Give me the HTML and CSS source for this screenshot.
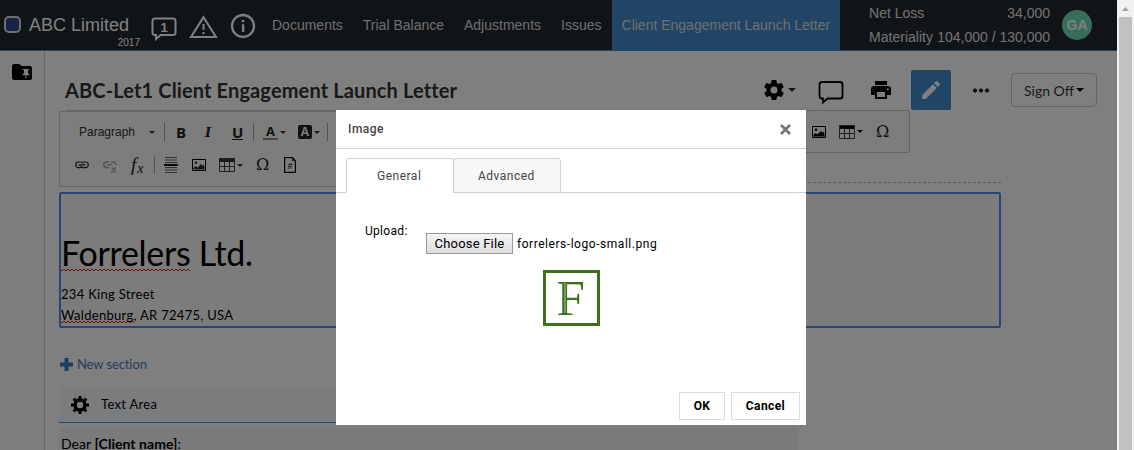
FILE: index.html
```html
<!DOCTYPE html>
<html lang="en">
<head>
<meta charset="utf-8">
<title>ABC-Let1 Client Engagement Launch Letter</title>
<link rel="stylesheet" href="styles.css">
</head>
<body>
<svg class="defs" width="0" height="0">
  <symbol id="picture" viewBox="0 0 14 12"><path d="M.5.5h13v11H.5z" fill="none" stroke="#000"/><circle cx="4" cy="3.8" r="1.3"/><path d="M1.5 10.5V9l2-2 2 1.5L9 5l1.5 1.5 1-.8L12.5 8v2.500z"/></symbol>
  <symbol id="table" viewBox="0 0 16 14"><path d="M0 0h16v4H0z"/><path d="M.5.5h15v13H.5zM.5 8.500h15M5.500 4v9.500M10.500 4v9.500" fill="none" stroke="#444"/></symbol>
  <symbol id="caret" viewBox="0 0 6 3"><path d="M0 0h6L3 3z"/></symbol>
  <symbol id="gear" viewBox="0 0 24 24"><path fill-rule="evenodd" d="M19.430 12.980c.04-.32.070-.64.070-.98s-.03-.66-.07-.98l2.110-1.650c.19-.15.240-.42.120-.64l-2-3.460c-.12-.22-.39-.3-.61-.22l-2.490 1c-.52-.4-1.080-.73-1.690-.98l-.38-2.650A.49.49 0 0 0 14 2h-4c-.25 0-.46.180-.49.420l-.38 2.650c-.61.250-1.170.59-1.690.98l-2.490-1c-.23-.09-.49 0-.61.220l-2 3.460c-.13.220-.07.490.12.640l2.110 1.650c-.04.320-.07.650-.07.980s.03.660.07.980l-2.110 1.650c-.19.150-.24.420-.12.640l2 3.460c.12.220.39.300.61.220l2.490-1c.52.400 1.080.730 1.690.980l.38 2.650c.03.240.24.420.49.420h4c.25 0 .46-.18.49-.42l.38-2.650c.61-.25 1.170-.59 1.690-.98l2.490 1c.23.090.49 0 .61-.22l2-3.460c.12-.22.070-.49-.12-.64zM12 15.500a3.500 3.500 0 1 1 0-7 3.500 3.500 0 0 1 0 7z"/></symbol>
</svg>
<div class="app">
  <header class="topbar">
    <span class="brand-mark"></span>
    <div class="brand"><span class="brand-name">ABC Limited</span><span class="brand-year">2017</span></div>
    <svg class="h-comment" width="26" height="26" viewBox="0 0 26 26"><path d="M4 1.500h18q2.500 0 2.500 2.500v11.500q0 2.500-2.500 2.500H9.500L5 22v-4H4q-2.500 0-2.500-2.500V4Q1.500 1.500 4 1.500z" fill="none" stroke="#fff" stroke-width="2"/><text x="13" y="14.500" text-anchor="middle">1</text></svg>
    <svg class="h-warn" width="29" height="24" viewBox="0 0 29 24"><path d="M14.500 2.200 27 22H2z" fill="none" stroke="#fff" stroke-width="2.100"/><path d="M13.500 9h2v6h-2zM13.500 17h2v2.200h-2z" fill="#fff"/></svg>
    <svg class="h-info" width="26" height="26" viewBox="0 0 26 26"><circle cx="13" cy="13" r="11" fill="none" stroke="#fff" stroke-width="2.300"/><path d="M11.900 7h2.400v2.300h-2.400zM11.900 11.200h2.400V19h-2.400z" fill="#fff"/></svg>
    <nav class="nav"><a>Documents</a><a>Trial Balance</a><a>Adjustments</a><a>Issues</a><a class="active">Client Engagement Launch Letter</a></nav>
    <div class="totals"><div><span>Net Loss</span><span>34,000</span></div><div><span>Materiality</span><span>104,000 / 130,000</span></div></div>
    <span class="avatar">GA</span>
  </header>
  <div class="main">
    <aside class="side"><svg width="20" height="16" viewBox="0 0 20 16"><path d="M2 0h5.500l2 2H18q2 0 2 2v10q0 2-2 2H2q-2 0-2-2V2q0-2 2-2z"/><path d="M11 5h6v1h-1v3l1.500 1.500v.8h-3V14h-1v-2.700h-3v-.8L12 9V6h-1z" fill="#fff"/></svg></aside>
    <div class="doc">
      <div class="title-row">
        <h1>ABC-Let1 Client Engagement Launch Letter</h1>
        <svg class="t-gear" width="24" height="24"><use href="#gear"/></svg>
        <svg class="t-caret" width="8" height="4"><use href="#caret"/></svg>
        <svg class="t-comment" width="26" height="25" viewBox="0 0 26 25"><path d="M4 2h18q2.500 0 2.500 2.500V16q0 2.500-2.500 2.500H9.500L5 22.500v-4H4Q1.500 18.500 1.500 16V4.500Q1.500 2 4 2z" fill="none" stroke="#000" stroke-width="1.800"/></svg>
        <svg class="t-print" width="20" height="18" viewBox="0 0 20 18"><path fill-rule="evenodd" d="M4 0h12v4H4zM3 5h14q3 0 3 3v6h-4v4H4v-4H0V8q0-3 3-3zm3 6v5h8v-5zm10.800-3.800a1 1 0 1 0 .1 0z"/></svg>
        <span class="edit"><svg width="18" height="18" viewBox="0 0 18 18"><path d="M0 14.200V18h3.800L14.800 7 11 3.200zM17.700 4.100q.6-.7 0-1.400L15.300.3q-.7-.6-1.400 0L12 2.200 15.800 6z" fill="#fff"/></svg></span>
        <svg class="t-more" width="17" height="5"><circle cx="3" cy="2.500" r="2"/><circle cx="9" cy="2.500" r="2"/><circle cx="15" cy="2.500" r="2"/></svg>
        <span class="signoff">Sign Off <svg width="8" height="4"><use href="#caret"/></svg></span>
      </div>
      <div class="bars">
        <div class="bar-wide">
          <svg width="14" height="12"><use href="#picture"/></svg>
          <svg class="gap13" width="16" height="14"><use href="#table"/></svg>
          <svg class="gap2" width="6" height="3"><use href="#caret"/></svg>
          <span class="omega wide-omega">Ω</span>
        </div>
        <div class="bar-left">
          <div class="tools">
            <span class="para">Paragraph</span><svg class="c-para" width="6" height="3"><use href="#caret"/></svg><i class="sep"></i>
            <b class="g bold">B</b><b class="g ital">I</b><b class="g under">U</b><i class="sep s2"></i>
            <b class="g fore">A</b><svg class="gap2" width="6" height="3"><use href="#caret"/></svg>
            <b class="g back">A</b><svg class="gap2" width="6" height="3"><use href="#caret"/></svg><i class="sep s3"></i>
          </div>
          <div class="tools second">
            <svg class="link" width="14" height="8" viewBox="0 0 14 8"><path d="M6 1H3.500a2.700 2.700 0 0 0 0 5.600H6M8 1h2.500a2.700 2.700 0 0 1 0 5.600H8M3.500 3.800h7M6 1q2 0 2 1.500M8 6.600q-2 0-2-1.500" fill="none" stroke="#222" stroke-width="1.200"/></svg>
            <svg class="unlink" width="14" height="12" viewBox="0 0 14 12"><path d="M6 1H3.500a2.700 2.700 0 0 0 0 5.600H6M8 1h2.500a2.700 2.700 0 0 1 2.500 3M3.500 3.800h6M8.500 6.500l4.500 5M13 6.500l-4.500 5" fill="none" stroke="#a6a6a6" stroke-width="1.300"/></svg>
            <span class="fx">f<sub>x</sub></span><i class="sep s4"></i>
            <svg class="rule" width="14" height="16" viewBox="0 0 14 16"><path d="M1 .5h12M1 3h12M1 5.500h12M1 10.500h12M1 13h12M1 15.500h12" stroke="#666"/><path d="M0 8h14" stroke="#111" stroke-width="2"/></svg>
            <svg class="gap14" width="14" height="12"><use href="#picture"/></svg>
            <svg class="gap13" width="16" height="14"><use href="#table"/></svg>
            <svg class="gap2" width="6" height="3"><use href="#caret"/></svg>
            <span class="omega">Ω</span>
            <svg class="hash" width="12" height="16" viewBox="0 0 12 16"><path d="M.6.6h8L11.400 4v11.400H.6z" fill="none" stroke="#000" stroke-width="1.200"/><path d="M8 0v4h4z"/><text x="6" y="12" text-anchor="middle">#</text></svg>
          </div>
        </div>
        <div class="dash"></div>
      </div>
      <section class="editor">
        <p class="company"><span class="spell">Forrelers</span> Ltd.</p>
        <p class="addr">234 King Street</p>
        <p class="addr city"><span class="spell">Waldenburg</span>, AR 72475, USA</p>
      </section>
      <div class="new-section"><svg width="13" height="13" viewBox="0 0 13 13"><path d="M4.500 0h4v4.500H13v4H8.500V13h-4V8.500H0v-4h4.500z" fill="#367fc0"/></svg><span>New section</span></div>
      <div class="text-area"><svg width="18" height="18" viewBox="0 0 18 18"><path d="M7.500 0h3v3h-3zM7.500 15h3v3h-3zM0 7.500h3v3H0zM15 7.500h3v3h-3z"/><path d="M7.500 0h3v3h-3zM7.500 15h3v3h-3zM0 7.500h3v3H0zM15 7.500h3v3h-3z" transform="rotate(45 9 9)"/><circle cx="9" cy="9" r="5" fill="none" stroke="#000" stroke-width="3.400"/></svg><span>Text Area</span></div>
      <div class="letter">Dear <b>[Client name]</b>:</div>
    </div>
  </div>
  <div class="overlay"></div>
  <div class="dialog">
    <div class="d-head"><span>Image</span><svg width="11" height="11" viewBox="0 0 11 11"><path d="m1 1 9 9M10 1l-9 9" stroke="#777" stroke-width="2.800"/></svg></div>
    <div class="tabs"><span class="tab on">General</span><span class="tab">Advanced</span></div>
    <div class="upload"><label>Upload:</label><button>Choose File</button><span class="file">forrelers-logo-small.png</span></div>
    <div class="logo"><svg width="51" height="50"><text x="10.500" y="42">F</text><path d="M19 10v30" stroke="#94b57e" stroke-width="1.700" opacity=".75"/></svg></div>
    <div class="actions"><button class="ok">OK</button><button class="cancel">Cancel</button></div>
  </div>
</div>
<div class="scrollbar"><svg width="7" height="4" viewBox="0 0 7 4"><path d="M3.500 0 7 4H0z" fill="#a3a3a3"/></svg><div class="thumb"></div></div>
</body>
</html>
```
FILE: styles.css
```css
* { box-sizing: border-box; }
body { margin: 0; display: flex; width: 1134px; height: 450px; overflow: hidden; background: #fff; font-family: "Liberation Sans", Arial, sans-serif; }
svg { display: block; flex: none; }
.defs { position: absolute; }
.app { position: relative; width: 1117px; height: 450px; overflow: hidden; }

.topbar { display: flex; align-items: flex-start; height: 51px; background: #22282d; border-bottom: 1px solid #428bca; color: #fff; padding-left: 4px; white-space: nowrap; }
.brand-mark { width: 17px; height: 17px; margin-top: 16px; border: 2px solid #ddd; border-radius: 5px; background: #28468c; }
.brand { display: flex; flex-direction: column; width: 111px; margin-left: 8px; }
.brand-name { font-size: 18px; line-height: 20px; margin-top: 15px; }
.brand-year { font-size: 10px; line-height: 12px; text-align: right; margin-top: 2px; }
.h-comment { margin: 17px 0 0 11px; }
.h-comment text { font: bold 13px "Liberation Sans", sans-serif; fill: #fff; }
.h-warn { margin: 15px 0 0 12px; }
.h-info { margin: 12.500px 0 0 11.500px; }
.nav { display: flex; margin-left: 6.500px; font-size: 14px; line-height: 50px; }
.nav a { padding: 0 10px; height: 51px; color: #ddd; }
.nav .active { background: #428bca; }
.totals { width: 181px; margin: 1px 0 0 29px; font-size: 14px; line-height: 24px; color: #e2e2e2; }
.totals div { display: flex; justify-content: space-between; }
.avatar { width: 30px; height: 30px; margin: 10px 0 0 12px; border-radius: 50%; background: #6cdcb4; font: bold 14px/30px "Liberation Sans", sans-serif; text-align: center; }

.main { display: flex; height: 399px; }
.side { width: 45px; padding: 13px 0 0 12px; background: #fafafa; border-right: 1px solid #d0d0d0; }
.doc { flex: 1; padding-left: 14px; font-family: Lato, sans-serif; }
.title-row { display: flex; align-items: center; height: 59px; padding: 19px 0 0 6px; }
h1 { margin: 0; width: 697px; font-size: 20px; line-height: 40px; font-weight: 700; letter-spacing: .13px; color: #333; white-space: nowrap; }
.t-caret { margin-left: 2px; fill: #333; }
.t-comment { margin: 5px 0 0 22px; }
.t-print { margin-left: 27px; }
.edit { display: flex; align-items: center; justify-content: center; width: 40px; height: 40px; margin-left: 20px; background: #428bca; border-radius: 2px; }
.t-more { margin-left: 21px; }
.signoff { display: flex; align-items: center; gap: 2px; width: 86px; height: 34px; margin-left: 22px; padding-left: 12px; border: 1px solid #ccc; border-radius: 4px; font-size: 14px; color: #333; white-space: nowrap; }

.bars { display: grid; height: 82px; grid-template-columns: 942px; }
.bars > * { grid-area: 1 / 1; }
.bar-wide { display: flex; align-items: center; justify-content: flex-end; width: 845px; height: 43px; margin-left: 6px; padding-right: 19px; background: #fafafa; border: 1px solid #c8c8c8; border-radius: 2px; }
.bar-left { width: 320px; height: 76px; margin-top: 1px; padding-top: 3px; background: #fafafa; border: 1px solid #d0d0d0; }
.dash { height: 1px; align-self: start; margin: 72px 0 0 500px; border-top: 1px dashed #bbb; }
.tools { display: flex; align-items: center; height: 34px; padding-left: 19px; fill: #333; color: #222; }
.second { height: 32px; padding-left: 15px; }
.para { width: 70px; font: 12px "Liberation Sans", sans-serif; color: #333; }
.sep { width: 1px; height: 18px; background: #aaa; margin-left: 9px; }
.g { flex: none; font: bold 15px/17px "Open Sans", sans-serif; text-align: center; }
.bold { width: 10px; margin-left: 11px; }
.ital { width: 10px; margin-left: 17px; font-family: "DejaVu Serif", serif; font-style: italic; font-size: 13px; }
.under { width: 11px; margin-left: 19px; line-height: 14px; border-bottom: 1px solid #222; }
.s2 { margin-left: 10px; }
.fore { width: 15px; margin-left: 9px; font-size: 13px; line-height: 13px; border-bottom: 2px solid #888; }
.back { width: 14px; margin-left: 12px; font-size: 12px; line-height: 14px; background: #222; color: #eee; border-radius: 2px; }
.s3 { margin-left: 7px; }
.gap2 { margin-left: 2px; }
.gap13 { margin-left: 13px; }
.gap14 { margin-left: 14px; }
.unlink { margin: 3px 0 0 14px; }
.fx { width: 15px; margin-left: 14px; font: italic 19px/20px "Liberation Serif", serif; letter-spacing: 1px; white-space: nowrap; }
.fx sub { font-size: 14px; line-height: 0; vertical-align: -2px; }
.s4 { margin-left: 8px; }
.rule { margin-left: 9px; }
.omega { width: 14px; margin-left: 13px; font: 16px/18px "DejaVu Serif", serif; color: #222; }
.hash { margin-left: 14px; }
.hash text { font: bold 9px "Liberation Sans", sans-serif; }

.editor { width: 942px; height: 136px; padding-top: 37px; background: #f8f8f8; border: 2px solid #538af0; border-radius: 2px; color: #000; }
.editor p { margin: 0; white-space: nowrap; }
.spell { background: linear-gradient(90deg, #e02020 50%, transparent 0) 0 100% / 4px 1px repeat-x, linear-gradient(90deg, #e02020 50%, transparent 0) 2px calc(100% - 1px) / 4px 1px repeat-x; }
.editor .company { margin-bottom: 10px; font-size: 34px; line-height: 43px; letter-spacing: -.3px; }
.company .spell { background-position: 0 calc(100% - 2px), 2px calc(100% - 3px); }
.addr { font-size: 13px; line-height: 21px; letter-spacing: .3px; }
.new-section { display: flex; align-items: center; gap: 4px; height: 59px; padding: 13px 0 0 1px; font-size: 13px; letter-spacing: -.1px; color: #4a80b8; }
.text-area { display: flex; align-items: center; gap: 12px; width: 739px; height: 36px; padding-left: 12px; background: #f6f9fc; border-bottom: 1px solid #428bca; font-size: 13px; letter-spacing: .3px; }
.text-area span { margin-top: -2px; }
.letter { width: 739px; height: 22px; margin-top: 5px; padding: 5px 0 0 2px; background: #f4f4f4; font-size: 14px; line-height: 21px; letter-spacing: .04px; white-space: pre; }

.overlay { position: absolute; inset: 0; background: rgba(0, 0, 0, .5); }
.dialog { position: absolute; left: 336px; top: 110px; width: 470px; height: 315px; background: #fff; font: 12px Roboto, sans-serif; letter-spacing: .5px; color: #444; }
.d-head { display: flex; justify-content: space-between; height: 39px; padding: 12px 15px 0 12px; border-bottom: 1px solid #d1d1d1; font-weight: 500; line-height: 14px; }
.d-head svg { margin-top: 2px; }
.tabs { display: flex; height: 44px; padding: 9px 0 0 10px; background: linear-gradient(#d1d1d1, #d1d1d1) bottom / 100% 1px no-repeat; }
.tab { width: 108px; height: 35px; padding-left: 30px; margin-right: -1px; border: 1px solid #d1d1d1; border-radius: 3px 3px 0 0; background: #f8f8f8; line-height: 34px; }
.tab + .tab { padding-left: 24px; }
.tab.on { background: #fff; border-bottom-color: #fff; }
.upload { display: flex; height: 77px; padding: 31px 0 0 29px; color: #000; }
.upload label { width: 61px; line-height: 14px; letter-spacing: .3px; }
.upload button { width: 87px; height: 21px; margin-top: 9px; padding: 0; border: 1px solid #999; border-radius: 0; background: linear-gradient(#f4f4f4, #ddd); font: 13px/18px Roboto, sans-serif; letter-spacing: .2px; white-space: nowrap; }
.file { margin: 10px 0 0 4px; line-height: 21px; letter-spacing: .54px; white-space: nowrap; }
.logo { width: 57px; height: 56px; margin-left: 207px; border: 3px solid #3e711b; }
.logo text { font: 51px "Liberation Serif", serif; letter-spacing: 0; fill: #3e711b; }
.actions { display: flex; justify-content: flex-end; gap: 6px; padding: 66px 6px 0 0; }
.actions button { height: 28px; padding: 0; border: 1px solid #ddd; background: #fff; font: 700 12px Roboto, sans-serif; letter-spacing: .4px; color: #000; }
.ok { width: 46px; }
.cancel { width: 69px; }

.scrollbar { width: 17px; height: 450px; padding: 7px 2px 0; background: #f1f1f1; }
.scrollbar svg { margin-left: 3px; }
.thumb { width: 13px; height: 440px; margin-top: 6px; background: #c1c1c1; }
```
